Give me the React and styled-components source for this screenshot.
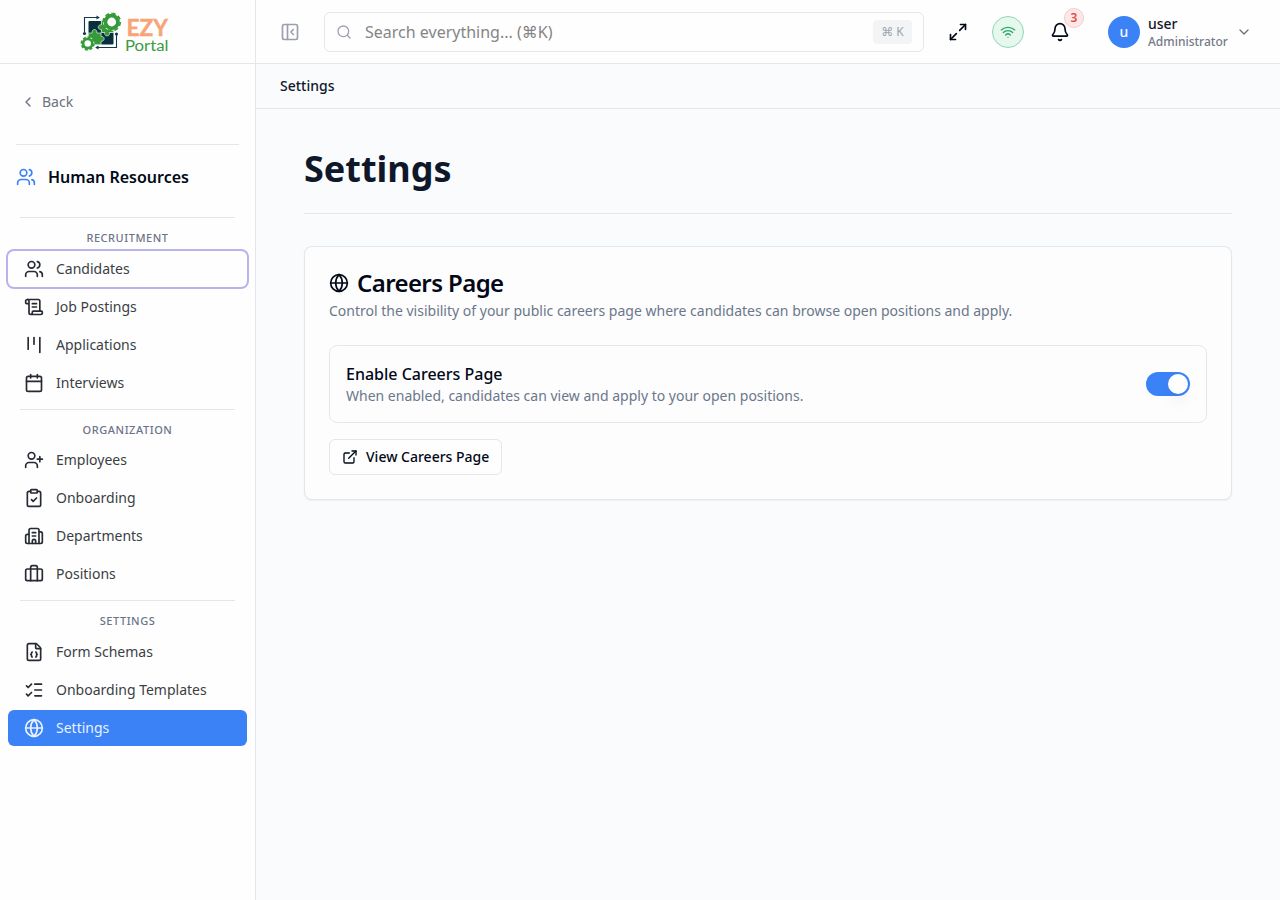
import { useState } from "react";
import styled, { createGlobalStyle, css } from "styled-components";
import {
    Bell,
    Briefcase,
    Building2,
    Calendar,
    ChevronDown,
    ChevronLeft,
    ClipboardCheck,
    ExternalLink,
    FileJson,
    Globe,
    Kanban,
    ListChecks,
    Maximize2,
    PanelLeftClose,
    ScrollText,
    Search,
    UserPlus,
    Users,
    Wifi
} from "lucide-react";

const GlobalStyle = createGlobalStyle`
    *, *::before, *::after {
        box-sizing: border-box;
    }
    body {
        margin: 0;
        font-family: "Noto Sans", "DejaVu Sans", sans-serif;
        font-size: 14px;
        line-height: 20px;
        color: #020817;
        background-color: #f9fbfd;
    }
    button, input {
        font: inherit;
        color: inherit;
    }
    h1, h2, p {
        margin: 0;
    }
    svg {
        display: block;
        flex-shrink: 0;
    }
`;

const Layout = styled.div`
    display: flex;
    height: 100vh;
    overflow: hidden;
`;

const Sidebar = styled.aside`
    display: flex;
    flex-direction: column;
    flex-shrink: 0;
    width: 256px;
    border-right: 1px solid #e3e6ea;
    background-color: #fefefe;
`;

const LogoBox = styled.div`
    display: flex;
    justify-content: center;
    height: 64px;
    padding-right: 5px;
    border-bottom: 1px solid #e3e6ea;
`;

const BackBox = styled.div`
    margin: 0 16px;
    padding: 20px 0 24px;
    height: 81px;
    border-bottom: 1px solid #e3e6ea;
`;

const BackButton = styled.button`
    display: flex;
    align-items: center;
    gap: 6px;
    height: 36px;
    padding: 0 4px;
    border: none;
    background: none;
    color: #6b7280;
`;

const ModuleTitle = styled.div`
    display: flex;
    align-items: center;
    gap: 12px;
    height: 64px;
    margin-bottom: 8px;
    padding: 0 16px;
    font-size: 16px;
    font-weight: 600;
    svg {
        color: #3b82f6;
    }
`;

const NavGroup = styled.div`
    padding: 0 8px 8px;
`;

const NavLabel = styled.div`
    margin: 0 12px;
    padding: 12px 0 4px;
    border-top: 1px solid #e3e6ea;
    font-size: 11px;
    font-weight: 500;
    line-height: 16.5px;
    letter-spacing: 0.55px;
    text-align: center;
    text-transform: uppercase;
    color: #6b7488;
`;

const NavList = styled.div`
    display: flex;
    flex-direction: column;
    gap: 2px;
`;

const NavItem = styled.a`
    display: flex;
    align-items: center;
    gap: 12px;
    height: 36px;
    padding: 0 16px;
    border-radius: 6px;
    color: #3b3e45;
    cursor: pointer;
    svg {
        color: #262a32;
    }
    ${props => props.$focused && css`
        box-shadow: 0 0 0 2px #b8b3ea;
    `}
    ${props => props.$active && css`
        color: #e8f1ff;
        background-color: #3b82f6;
        svg {
            color: #e8f1ff;
        }
    `}
`;

const Page = styled.div`
    display: flex;
    flex-direction: column;
    flex: 1;
    min-width: 0;
`;

const Header = styled.header`
    display: flex;
    align-items: center;
    height: 64px;
    padding: 0 24px 0 16px;
    border-bottom: 1px solid #e3e6ea;
    background-color: #fefefe;
`;

const IconButton = styled.button`
    position: relative;
    display: flex;
    align-items: center;
    justify-content: center;
    width: 36px;
    height: 36px;
    padding: 0;
    border: none;
    background: none;
    color: ${props => props.$muted ? "#9a9fae" : "#020817"};
`;

const SearchBox = styled.label`
    display: flex;
    align-items: center;
    width: 600px;
    height: 40px;
    margin: 0 16px;
    padding: 0 11px;
    border: 1px solid #e5e7eb;
    border-radius: 6px;
    color: #9ca3af;
    input {
        flex: 1;
        min-width: 0;
        margin-left: 13px;
        padding: 0;
        border: none;
        outline: none;
        background: none;
        font-size: 16px;
        line-height: 24px;
    }
    input::placeholder {
        color: #858585;
        opacity: 1;
    }
`;

const Shortcut = styled.span`
    width: 39px;
    padding: 4px 0;
    border-radius: 4px;
    background-color: #f3f4f6;
    font-size: 12px;
    line-height: 16px;
    text-align: center;
    white-space: nowrap;
    color: #9ca3af;
`;

const Status = styled.div`
    display: flex;
    align-items: center;
    justify-content: center;
    width: 32px;
    height: 32px;
    margin: 0 18px 0 16px;
    border: 1px solid #8fd6b3;
    border-radius: 50%;
    background-color: #e6f7ee;
    color: #2aa76a;
`;

const Badge = styled.span`
    position: absolute;
    top: -6px;
    right: -6px;
    width: 20px;
    height: 20px;
    border: 1px solid #fbcaca;
    border-radius: 50%;
    background-color: #fde8e8;
    font-size: 12px;
    font-weight: 600;
    line-height: 18px;
    text-align: center;
    color: #e04848;
`;

const UserMenu = styled.div`
    display: flex;
    align-items: center;
    gap: 8px;
    margin-left: auto;
    padding-right: 4px;
    color: #6b7280;
`;

const Avatar = styled.div`
    width: 32px;
    height: 32px;
    border-radius: 50%;
    background-color: #3b82f6;
    font-weight: 500;
    line-height: 32px;
    text-align: center;
    color: #f8fafc;
`;

const UserInfo = styled.div`
    width: 80px;
    padding-top: 2px;
`;

const UserName = styled.div`
    font-weight: 500;
    line-height: 18px;
    color: #111827;
`;

const UserRole = styled.div`
    font-size: 12px;
    font-weight: 500;
    line-height: 18px;
    color: #747a86;
`;

const Breadcrumb = styled.div`
    height: 45px;
    padding: 12px 24px;
    border-bottom: 1px solid #e3e6ea;
    font-weight: 500;
    color: #0f172a;
`;

const Content = styled.main`
    flex: 1;
    padding: 40px 48px;
`;

const PageTitle = styled.h1`
    margin-bottom: 32px;
    padding-bottom: 24px;
    border-bottom: 1px solid #e3e6ea;
    font-size: 36px;
    font-weight: 700;
    line-height: 40px;
    color: #0f172a;
`;

const Card = styled.section`
    padding: 24px;
    border: 1px solid #e3e6ea;
    border-radius: 8px;
    background-color: #fdfdfe;
    box-shadow: 0 1px 2px rgba(0, 0, 0, 0.05);
`;

const CardTitle = styled.h2`
    display: flex;
    align-items: center;
    gap: 8px;
    margin-bottom: 6px;
    font-size: 24px;
    font-weight: 600;
    line-height: 24px;
    letter-spacing: -0.6px;
`;

const Hint = styled.p`
    color: #6b778b;
`;

const OptionRow = styled.div`
    display: flex;
    align-items: center;
    justify-content: space-between;
    margin: 24px 0 16px;
    padding: 16px;
    border: 1px solid #e3e6ea;
    border-radius: 8px;
`;

const OptionName = styled.div`
    font-size: 16px;
    font-weight: 500;
    line-height: 24px;
`;

const Switch = styled.button`
    display: flex;
    justify-content: ${props => props.$on ? "flex-end" : "flex-start"};
    width: 44px;
    height: 24px;
    padding: 2px;
    border: none;
    border-radius: 12px;
    background-color: ${props => props.$on ? "#3b82f6" : "#e2e8f0"};
    &::after {
        content: "";
        width: 20px;
        height: 20px;
        border-radius: 50%;
        background-color: #fefefe;
        box-shadow: 0 10px 15px -3px rgba(0, 0, 0, 0.08);
    }
`;

const OutlineButton = styled.button`
    display: inline-flex;
    align-items: center;
    gap: 8px;
    height: 36px;
    padding: 0 12px;
    border: 1px solid #e3e6ea;
    border-radius: 6px;
    background-color: #fefefe;
    font-weight: 500;
    vertical-align: top;
`;

const groups = [
    {
        name: "Recruitment",
        items: [
            {name: "Candidates", icon: Users, focused: true},
            {name: "Job Postings", icon: ScrollText},
            {name: "Applications", icon: Kanban},
            {name: "Interviews", icon: Calendar}
        ]
    },
    {
        name: "Organization",
        items: [
            {name: "Employees", icon: UserPlus},
            {name: "Onboarding", icon: ClipboardCheck},
            {name: "Departments", icon: Building2},
            {name: "Positions", icon: Briefcase}
        ]
    },
    {
        name: "Settings",
        items: [
            {name: "Form Schemas", icon: FileJson},
            {name: "Onboarding Templates", icon: ListChecks},
            {name: "Settings", icon: Globe, active: true}
        ]
    }
];

// Gear outline: a ring with a dashed ring of teeth around it
const Gear = ({x, y, r, width}) => (
    <g fill="none" stroke="#359a38">
        <circle cx={x} cy={y} r={r} strokeWidth={width} />
        <circle cx={x} cy={y} r={r + width / 2 + 0.4} strokeWidth="1.6" pathLength="80" strokeDasharray="6 4" />
    </g>
);

const Logo = () => (
    <svg width="92" height="63" viewBox="79 0 92 63" role="img" aria-label="EZY Portal">
        <g fill="none" stroke="#12394a" strokeWidth="1.1">
            <path d="M84.5 32V17.5H97" />
            <path d="M116.5 35V47.5H98" />
        </g>
        <g fill="#12394a">
            <circle cx="84.5" cy="33.5" r="1.6" />
            <circle cx="116.5" cy="34" r="1.6" />
            <path d="M96.5 15.5l3.3 2-3.3 2z" />
            <path d="M98.5 45.5l-3.3 2 3.3 2z" />
        </g>
        <path d="M89.5 21h11.8v12.5H88.5V22a1 1 0 0 1 1-1z" fill="#082f3e" />
        <path d="M100.5 32.5h13V43.5a1 1 0 0 1-1 1h-12z" fill="#082f3e" />
        <g fill="#359a38" stroke="#fefefe" strokeWidth=".6">
            <path d="M101.3 20.8h12.4v11.7h-4.3a2.5 2.5 0 1 1-4.6 0h-3.5v-3a2.4 2.4 0 1 1 0-4.6z" />
            <path d="M88.3 33h3.9a2.5 2.5 0 1 1 4.6 0h4.3v3.5a2.4 2.4 0 1 1 0 4.6v3.6H88.3z" />
        </g>
        <circle cx="111.7" cy="22" r="8.8" fill="#fefefe" />
        <circle cx="87.7" cy="43.5" r="6.8" fill="#fefefe" />
        <Gear x={111.7} y={22} r={6.3} width={3.8} />
        <Gear x={87.7} y={43.5} r={4.6} width={2.7} />
        <text x="126.5" y="36" textLength="41.5" lengthAdjust="spacingAndGlyphs" fontFamily="Lato, sans-serif" fontSize="23.5" fontWeight="700" fill="#f8a477" stroke="#f8a477" strokeWidth=".4">EZY</text>
        <text x="125" y="50.5" textLength="43.5" lengthAdjust="spacingAndGlyphs" fontFamily="Lato, sans-serif" fontSize="15.5" fontWeight="400" fill="#3d9b41">Portal</text>
    </svg>
);

const Navigation = () => (
    <Sidebar>
        <LogoBox><Logo /></LogoBox>
        <BackBox>
            <BackButton><ChevronLeft size={16} />Back</BackButton>
        </BackBox>
        <ModuleTitle><Users size={20} />Human Resources</ModuleTitle>
        {groups.map(group => (
            <NavGroup key={group.name}>
                <NavLabel>{group.name}</NavLabel>
                <NavList>
                    {group.items.map(({name, icon: Icon, active, focused}) => (
                        <NavItem key={name} $active={active} $focused={focused}>
                            <Icon size={20} />
                            {name}
                        </NavItem>
                    ))}
                </NavList>
            </NavGroup>
        ))}
    </Sidebar>
);

const TopBar = () => (
    <Header>
        <IconButton $muted aria-label="Collapse sidebar"><PanelLeftClose size={20} /></IconButton>
        <SearchBox>
            <Search size={16} />
            <input placeholder="Search everything... (⌘K)" />
            <Shortcut>⌘ K</Shortcut>
        </SearchBox>
        <IconButton aria-label="Full screen"><Maximize2 size={20} /></IconButton>
        <Status><Wifi size={16} /></Status>
        <IconButton aria-label="Notifications">
            <Bell size={20} />
            <Badge>3</Badge>
        </IconButton>
        <UserMenu>
            <Avatar>u</Avatar>
            <UserInfo>
                <UserName>user</UserName>
                <UserRole>Administrator</UserRole>
            </UserInfo>
            <ChevronDown size={16} />
        </UserMenu>
    </Header>
);

export default function App() {
    const [enabled, setEnabled] = useState(true);

    return (
        <Layout>
            <GlobalStyle />
            <Navigation />
            <Page>
                <TopBar />
                <Breadcrumb>Settings</Breadcrumb>
                <Content>
                    <PageTitle>Settings</PageTitle>
                    <Card>
                        <CardTitle><Globe size={20} />Careers Page</CardTitle>
                        <Hint>Control the visibility of your public careers page where candidates can browse open positions and apply.</Hint>
                        <OptionRow>
                            <div>
                                <OptionName>Enable Careers Page</OptionName>
                                <Hint>When enabled, candidates can view and apply to your open positions.</Hint>
                            </div>
                            <Switch $on={enabled} onClick={() => setEnabled(!enabled)} role="switch" aria-checked={enabled} />
                        </OptionRow>
                        <OutlineButton><ExternalLink size={16} />View Careers Page</OutlineButton>
                    </Card>
                </Content>
            </Page>
        </Layout>
    );
}
